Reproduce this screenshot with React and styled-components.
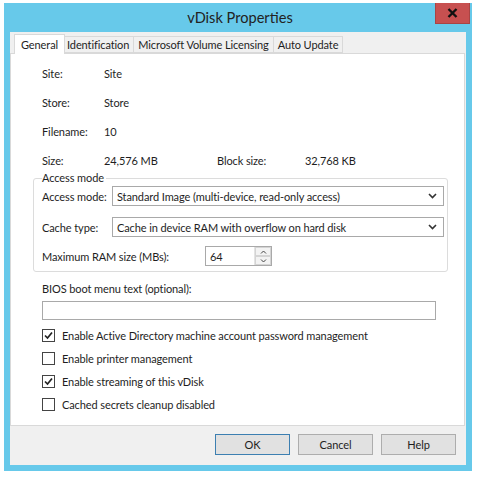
import styled, { createGlobalStyle } from "styled-components";

const GlobalStyle = createGlobalStyle`
  body {
    margin: 0;
    background: #fff;
    font-family: Lato, "Liberation Sans", Arial, sans-serif;
    font-size: 11px;
    letter-spacing: -0.1px;
    color: #1e1e1e;
  }
`;

const Frame = styled.div`
  margin: 3px 0 0 4px;
  width: 468px;
  height: 468px;
  box-sizing: border-box;
  background: #67c9ea;
  padding: 0 6px 6px 6px;
  display: flex;
  flex-direction: column;
`;

const TitleBar = styled.div`
  height: 29px;
  display: grid;
  grid-template-columns: 1fr auto 1fr;
  margin-right: -4px;
`;

const Title = styled.div`
  grid-column: 2;
  align-self: center;
  font-size: 14.6px;
  letter-spacing: 0;
  color: #222;
`;

const CloseBtn = styled.div`
  justify-self: end;
  width: 35px;
  height: 21px;
  box-sizing: border-box;
  background: #c75050;
  border: 1px solid #a94444;
  border-top: none;
  display: flex;
  align-items: center;
  justify-content: center;
`;

const Client = styled.div`
  flex: 1;
  background: #f0f0f0;
  display: flex;
  flex-direction: column;
`;

const TabStrip = styled.div`
  height: 21px;
  display: flex;
  align-items: flex-end;
  padding-left: 6px;
  position: relative;
  z-index: 1;
`;

const Tab = styled.div`
  height: ${(p) => (p.$active ? "20px" : "17px")};
  box-sizing: border-box;
  padding: 0 ${(p) => (p.$active ? "6px" : "4px")};
  margin: 0 ${(p) => (p.$active ? "-2px" : "0")} ${(p) => (p.$active ? "-1px" : "0")};
  border: 1px solid #d9d9d9;
  border-bottom: ${(p) => (p.$active ? "none" : "1px solid #d9d9d9")};
  border-left-width: ${(p) => (p.$first || p.$active ? "1px" : "0")};
  background: ${(p) => (p.$active ? "#fff" : "#f0f0f0")};
  display: flex;
  align-items: center;
  white-space: nowrap;
  position: relative;
  z-index: ${(p) => (p.$active ? 2 : 1)};
`;

const Panel = styled.div`
  height: 373px;
  box-sizing: border-box;
  margin-right: 1px;
  background: #fff;
  border: 1px solid #d9d9d9;
  padding: 5px 28px 0 31px;
  display: flex;
  flex-direction: column;
`;

const InfoRow = styled.div`
  height: 29px;
  display: flex;
  align-items: center;
`;

const Cell = styled.div`
  width: ${(p) => p.$w}px;
  flex-shrink: 0;
`;

const Group = styled.fieldset`
  margin: -4px 0 0 -9px;
  width: 415px;
  box-sizing: border-box;
  border: 1px solid #dcdcdc;
  border-radius: 3px;
  padding: 1px 3px 5px 8px;
  display: flex;
  flex-direction: column;
`;

const Legend = styled.legend`
  padding: 0 2px 0 0;
  margin-left: 0;
  line-height: 14px;
`;

const FieldRow = styled.div`
  display: flex;
  align-items: center;
  margin-top: ${(p) => p.$mt || 0}px;
`;

const FieldLabel = styled.div`
  width: ${(p) => p.$w}px;
  flex-shrink: 0;
  white-space: nowrap;
`;

const Select = styled.div`
  flex: 1;
  height: 20px;
  box-sizing: border-box;
  border: 1px solid #a9a9a9;
  background: #fff;
  display: flex;
  align-items: center;
  justify-content: space-between;
  padding: 0 6px 0 4px;
  white-space: nowrap;
`;

const Spinner = styled.div`
  width: 67px;
  height: 20px;
  box-sizing: border-box;
  border: 1px solid #a9a9a9;
  display: flex;
`;

const SpinValue = styled.div`
  flex: 1;
  padding-left: 4px;
  display: flex;
  align-items: center;
`;

const SpinButtons = styled.div`
  width: 16px;
  display: flex;
  flex-direction: column;
  border-left: 1px solid #e3e3e3;
`;

const SpinButton = styled.div`
  flex: 1;
  display: flex;
  align-items: center;
  justify-content: center;
  background: #f3f3f3;
  border: 1px solid #d4d4d4;
`;

const FieldCaption = styled.div`
  margin-top: 10px;
  line-height: 14px;
`;

const TextBox = styled.div`
  margin-top: 5px;
  width: 394px;
  height: 19px;
  box-sizing: border-box;
  border: 1px solid #a9a9a9;
  background: #fff;
`;

const CheckList = styled.div`
  margin-top: 4px;
  display: flex;
  flex-direction: column;
`;

const CheckRow = styled.label`
  height: 23px;
  display: flex;
  align-items: center;
  gap: 7px;
`;

const Box = styled.span`
  width: 13px;
  height: 13px;
  box-sizing: border-box;
  border: 1px solid #444;
  background: #fff;
  display: flex;
  align-items: center;
  justify-content: center;
`;

const Footer = styled.div`
  flex: 1;
  display: flex;
  justify-content: flex-end;
  align-items: flex-start;
  gap: 8px;
  padding: 8px 10px 0 0;
`;

const Button = styled.div`
  width: 75px;
  height: 21px;
  box-sizing: border-box;
  background: #e1e1e1;
  border: 1px solid ${(p) => (p.$default ? "#3c7fb1" : "#adadad")};
  display: flex;
  align-items: center;
  justify-content: center;
`;

function Chevron({ up }) {
  return (
    <svg width="9" height="6" viewBox="0 0 9 6">
      <path
        d={up ? "M1 5 L4.5 1.5 L8 5" : "M1 1 L4.5 4.5 L8 1"}
        fill="none"
        stroke="#333"
        strokeWidth="1.6"
      />
    </svg>
  );
}

function SmallArrow({ up }) {
  return (
    <svg width="7" height="4" viewBox="0 0 7 4">
      <path
        d={up ? "M1 3.5 L3.5 1 L6 3.5" : "M1 0.5 L3.5 3 L6 0.5"}
        fill="none"
        stroke="#444"
        strokeWidth="1"
      />
    </svg>
  );
}

function CheckBox({ checked, children }) {
  return (
    <CheckRow>
      <Box>
        {checked && (
          <svg width="9" height="9" viewBox="0 0 9 9">
            <path d="M1 4.5 L3.5 7 L8 1.5" fill="none" stroke="#222" strokeWidth="1.7" />
          </svg>
        )}
      </Box>
      {children}
    </CheckRow>
  );
}

const tabs = ["General", "Identification", "Microsoft Volume Licensing", "Auto Update"];

export default function App() {
  return (
    <>
      <GlobalStyle />
      <Frame>
        <TitleBar>
          <Title>vDisk Properties</Title>
          <CloseBtn>
            <svg width="11" height="10" viewBox="0 0 11 10">
              <path d="M1.5 1 L9.5 9 M9.5 1 L1.5 9" stroke="#111" strokeWidth="2.4" />
            </svg>
          </CloseBtn>
        </TitleBar>
        <Client>
          <TabStrip>
            {tabs.map((t, i) => (
              <Tab key={t} $active={i === 0} $first={i === 0}>
                {t}
              </Tab>
            ))}
          </TabStrip>
          <Panel>
            <InfoRow>
              <Cell $w={62}>Site:</Cell>
              <Cell>Site</Cell>
            </InfoRow>
            <InfoRow>
              <Cell $w={62}>Store:</Cell>
              <Cell>Store</Cell>
            </InfoRow>
            <InfoRow>
              <Cell $w={62}>Filename:</Cell>
              <Cell>10</Cell>
            </InfoRow>
            <InfoRow>
              <Cell $w={62}>Size:</Cell>
              <Cell $w={113}>24,576 MB</Cell>
              <Cell $w={88}>Block size:</Cell>
              <Cell>32,768 KB</Cell>
            </InfoRow>
            <Group>
              <Legend>Access mode</Legend>
              <FieldRow>
                <FieldLabel $w={70}>Access mode:</FieldLabel>
                <Select>
                  Standard Image (multi-device, read-only access)
                  <Chevron />
                </Select>
              </FieldRow>
              <FieldRow $mt={11}>
                <FieldLabel $w={70}>Cache type:</FieldLabel>
                <Select>
                  Cache in device RAM with overflow on hard disk
                  <Chevron />
                </Select>
              </FieldRow>
              <FieldRow $mt={9}>
                <FieldLabel $w={163}>Maximum RAM size (MBs):</FieldLabel>
                <Spinner>
                  <SpinValue>64</SpinValue>
                  <SpinButtons>
                    <SpinButton>
                      <SmallArrow up />
                    </SpinButton>
                    <SpinButton>
                      <SmallArrow />
                    </SpinButton>
                  </SpinButtons>
                </Spinner>
              </FieldRow>
            </Group>
            <FieldCaption>BIOS boot menu text (optional):</FieldCaption>
            <TextBox />
            <CheckList>
              <CheckBox checked>Enable Active Directory machine account password management</CheckBox>
              <CheckBox>Enable printer management</CheckBox>
              <CheckBox checked>Enable streaming of this vDisk</CheckBox>
              <CheckBox>Cached secrets cleanup disabled</CheckBox>
            </CheckList>
          </Panel>
          <Footer>
            <Button $default>OK</Button>
            <Button>Cancel</Button>
            <Button>Help</Button>
          </Footer>
        </Client>
      </Frame>
    </>
  );
}
